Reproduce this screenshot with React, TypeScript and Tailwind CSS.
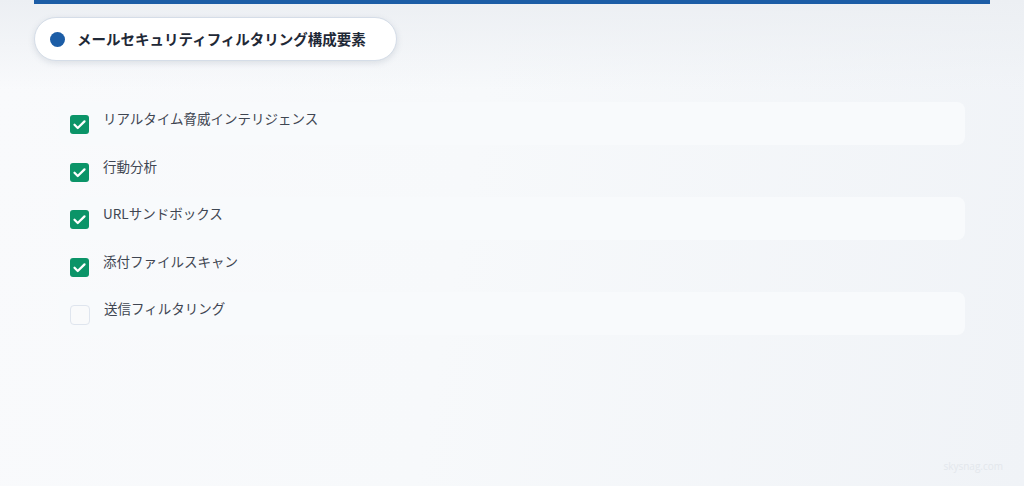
import React from 'react';

interface FilterItem {
  label: string;
  enabled: boolean;
  shaded: boolean;
}

const items: FilterItem[] = [
  { label: 'リアルタイム脅威インテリジェンス', enabled: true, shaded: true },
  { label: '行動分析', enabled: true, shaded: false },
  { label: 'URLサンドボックス', enabled: true, shaded: true },
  { label: '添付ファイルスキャン', enabled: true, shaded: false },
  { label: '送信フィルタリング', enabled: false, shaded: true },
];

const CheckBox: React.FC<{ checked: boolean }> = ({ checked }) =>
  checked ? (
    <span className="mt-[7px] flex h-[19px] w-[19px] shrink-0 items-center justify-center rounded-[3px] bg-[#0b9468]">
      <svg width="15" height="15" viewBox="0 0 24 24" fill="none">
        <path d="M4 12.5l5.2 5.2L20 7" stroke="#fff" strokeWidth="3.6" strokeLinecap="round" strokeLinejoin="round" />
      </svg>
    </span>
  ) : (
    <span className="mt-[7px] block h-[20px] w-[20px] shrink-0 rounded-[4px] border border-[#dfe5ee] bg-[#f9fafb]" />
  );

export default function App() {
  return (
    <div
      className="relative h-[486px] w-[1024px] overflow-hidden bg-[linear-gradient(100deg,#f9fafc_0%,#f7f9fb_45%,#f0f3f7_100%)]"
      style={{ fontFamily: '"Noto Sans CJK JP", "Noto Sans", sans-serif' }}
    >
      {/* soft grey haze under the top edge */}
      <div className="absolute inset-x-0 top-0 h-[90px] bg-[linear-gradient(180deg,#eceff3_0%,rgba(240,243,247,0)_100%)]" />

      <div className="relative mx-[34px] w-[956px]">
        {/* top accent bar */}
        <div className="h-[4px] bg-[#1c5da6]" />

        {/* section heading */}
        <div className="mt-[13px] inline-flex h-[44px] items-center gap-[12px] rounded-full border border-[#d5dde8] bg-white pl-[15px] pr-[30px] shadow-[0_2px_6px_rgba(100,116,139,0.18)]">
          <span className="h-[15px] w-[15px] rounded-full bg-[#1c5da6]" />
          <span className="text-[14.5px] font-bold leading-none text-[#1f2937]">
            メールセキュリティフィルタリング構成要素
          </span>
        </div>

        {/* component checklist */}
        <div className="mt-[41px] flex flex-col gap-[4.5px] px-[25px]">
          {items.map((item) => (
            <div
              key={item.label}
              className={`flex h-[43px] items-start gap-[14px] rounded-[8px] pl-[11px] pt-[6px] ${
                item.shaded ? 'bg-[#f8fafc]' : ''
              }`}
            >
              <CheckBox checked={item.enabled} />
              <span className="text-[13.5px] leading-[20px] text-[#3f4652]">{item.label}</span>
            </div>
          ))}
        </div>
      </div>

      <div className="absolute bottom-[12px] right-[21px] text-[10px] text-[#e3e7ec]" style={{ fontFamily: '"Open Sans", sans-serif' }}>
        skysnag.com
      </div>
    </div>
  );
}
